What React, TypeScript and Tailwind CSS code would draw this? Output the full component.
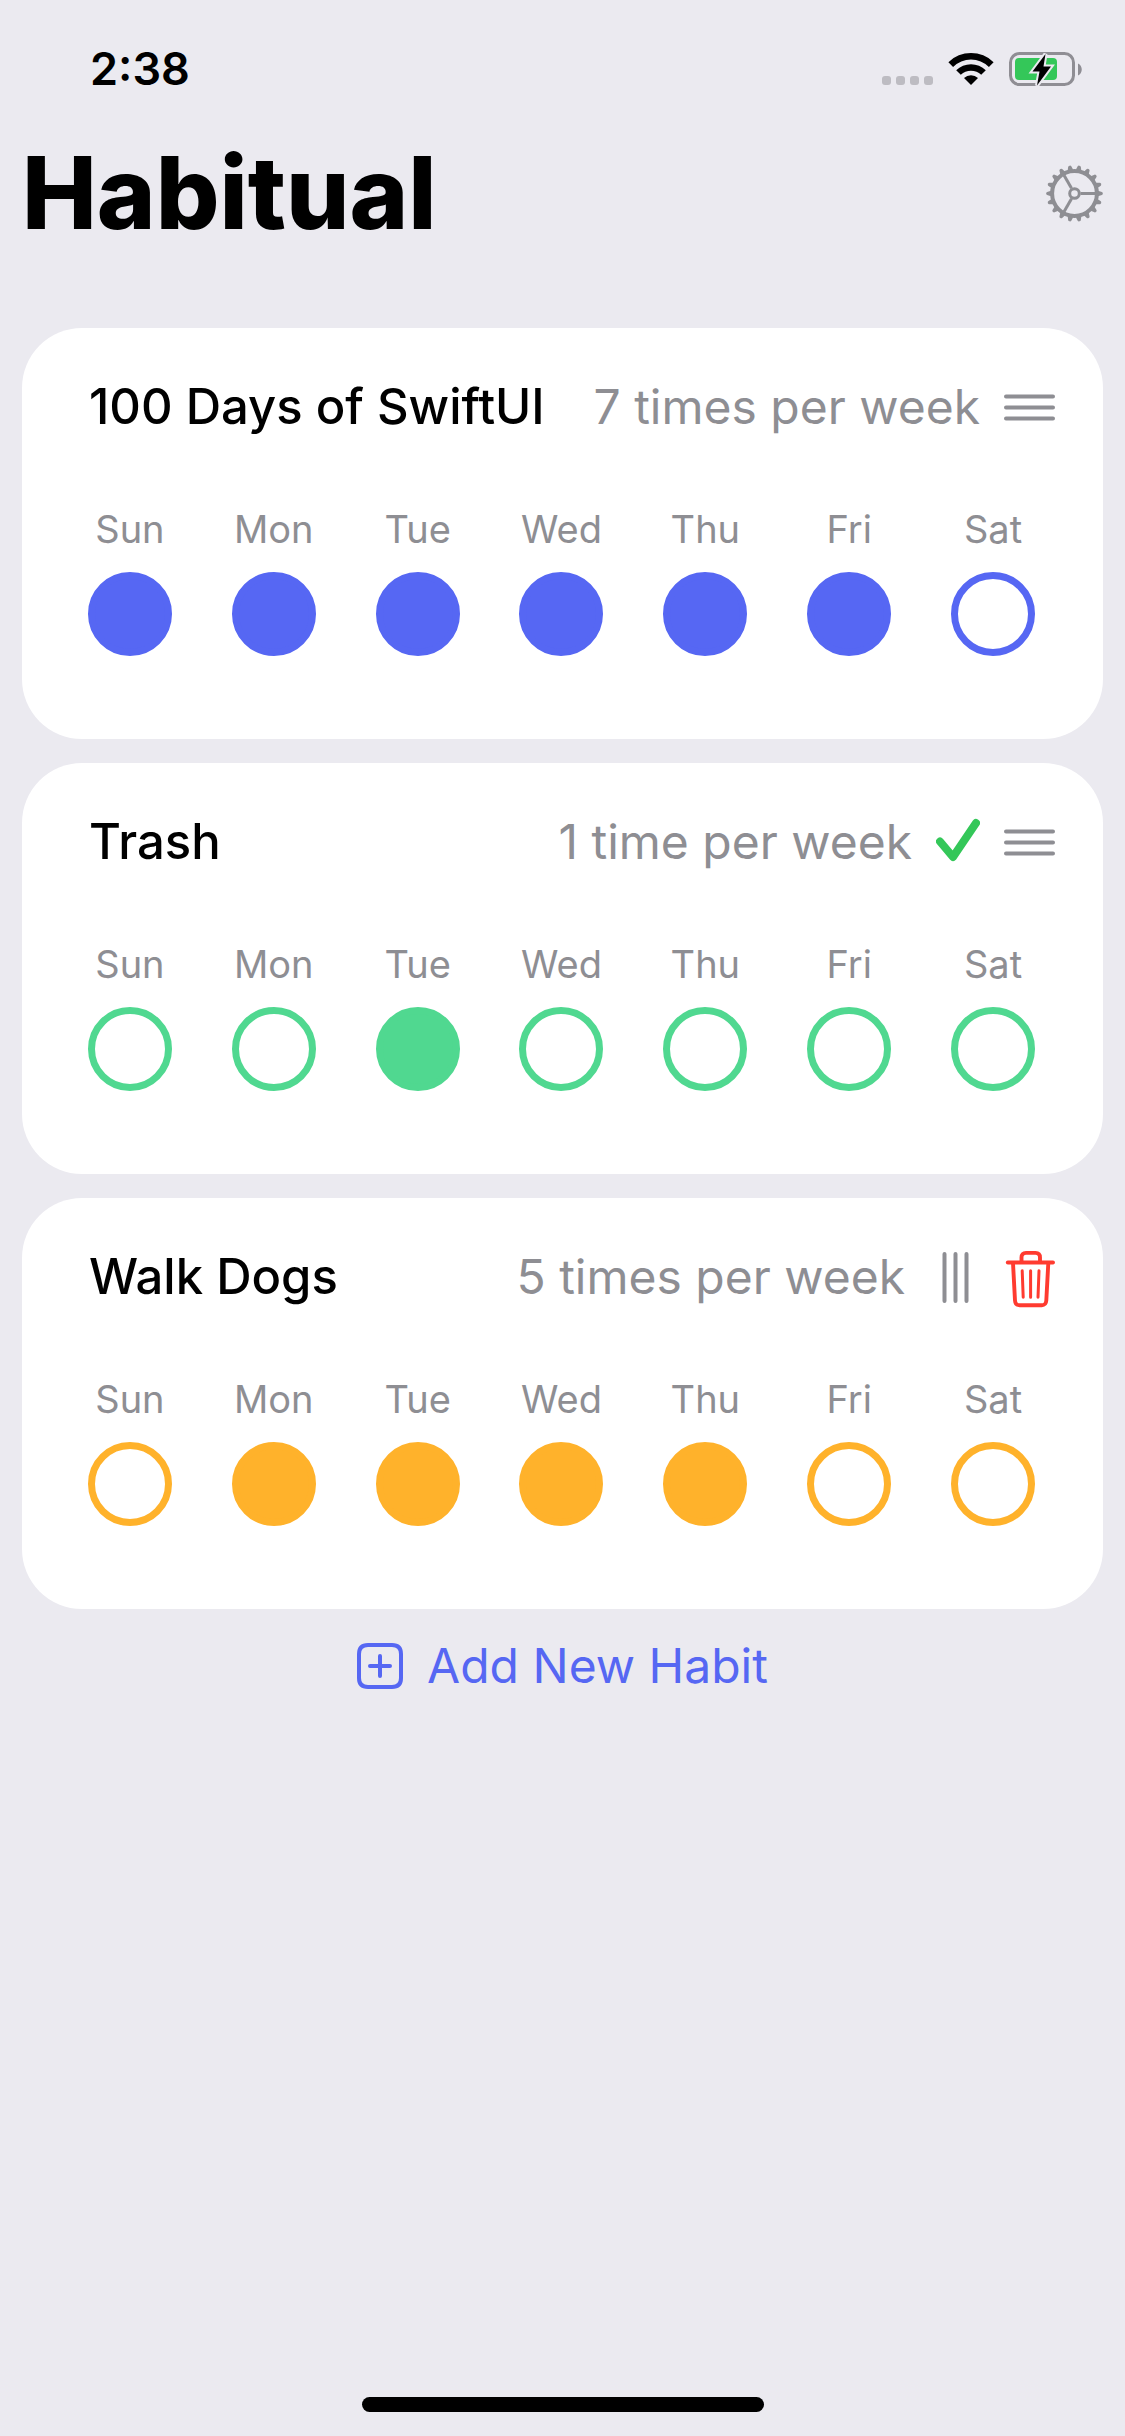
import { useState } from "react";

const DAYS = ["Sun", "Mon", "Tue", "Wed", "Thu", "Fri", "Sat"];

type Habit = {
  id: string;
  name: string;
  goal: string;
  circle: string;
  done: number[];
  complete?: boolean;
  editing?: boolean;
};

const HABITS: Habit[] = [
  {
    id: "swiftui",
    name: "100 Days of SwiftUI",
    goal: "7 times per week",
    circle: "border-[#5667f3] checked:bg-[#5667f3]",
    done: [0, 1, 2, 3, 4, 5],
  },
  {
    id: "trash",
    name: "Trash",
    goal: "1 time per week",
    circle: "border-[#50d890] checked:bg-[#50d890]",
    done: [2],
    complete: true,
  },
  {
    id: "dogs",
    name: "Walk Dogs",
    goal: "5 times per week",
    circle: "border-[#ffb22b] checked:bg-[#ffb22b]",
    done: [1, 2, 3, 4],
    editing: true,
  },
];

function SignalDots() {
  return (
    <div className="flex gap-[5px] self-end pb-[2px]">
      {[0, 1, 2, 3].map((i) => (
        <span key={i} className="size-[9px] rounded-[3px] bg-[#bdbcc2]" />
      ))}
    </div>
  );
}

function WifiIcon() {
  return (
    <svg width="46" height="34" viewBox="0 0 46 34" aria-label="Wi-Fi">
      <path d="M0.4 10.2 A32.2 32.2 0 0 1 45.6 10.2 L40.9 14.9 A25.6 25.6 0 0 0 5.1 14.9 Z" />
      <path d="M8.2 18.2 A21.2 21.2 0 0 1 37.8 18.2 L33.2 22.8 A14.6 14.6 0 0 0 12.8 22.8 Z" />
      <path d="M16 26 A10.2 10.2 0 0 1 30 26 L23 33 Z" />
    </svg>
  );
}

function BatteryIcon() {
  return (
    <svg width="74" height="36" viewBox="0 0 74 36" aria-label="Battery charging">
      <rect x="1.5" y="2.5" width="63" height="31" rx="9" fill="none" stroke="#8f8e94" strokeWidth="3" />
      <path d="M69 12.5 C74 14.5 74 22.5 69 24.5 Z" fill="#8f8e94" />
      <rect x="6" y="7" width="42" height="22" rx="4" fill="#34c759" />
      <path
        d="M36.5 3 L23.5 20.5 L30.5 20.5 L28 34.5 L42 15.5 L34.5 15.5 Z"
        fill="#000"
        stroke="#ebeaf0"
        strokeWidth="4"
        paintOrder="stroke"
      />
    </svg>
  );
}

const TEETH = Array.from({ length: 18 }, (_, i) => i * 20);

function GearIcon() {
  return (
    <svg width="57" height="57" viewBox="-28.5 -28.5 57 57" fill="none" stroke="#8e8e93">
      <circle r="22.4" strokeWidth="4" />
      {TEETH.map((a) => (
        <path
          key={a}
          d="M23.5 -2.8 L27.4 -1.6 Q28.3 -1.2 28.3 0 Q28.3 1.2 27.4 1.6 L23.5 2.8 Z"
          fill="#8e8e93"
          stroke="none"
          transform={`rotate(${a})`}
        />
      ))}
      <circle r="4.8" strokeWidth="3" />
      <g strokeWidth="3">
        <path d="M6 0 H21" />
        <path d="M6 0 H21" transform="rotate(120)" />
        <path d="M6 0 H21" transform="rotate(240)" />
      </g>
    </svg>
  );
}

function LinesIcon({ vertical }: { vertical?: boolean }) {
  return (
    <svg
      width="51"
      height="51"
      viewBox="0 0 51 51"
      fill="none"
      stroke="#8e8e93"
      strokeWidth="4"
      strokeLinecap="round"
    >
      <path d={vertical ? "M15.5 2 V49 M26.5 2 V49 M37.5 2 V49" : "M2 14.5 H49 M2 25.5 H49 M2 36.5 H49"} />
    </svg>
  );
}

function CheckIcon() {
  return (
    <svg
      width="44"
      height="60"
      viewBox="0 0 44 60"
      fill="none"
      stroke="#34c759"
      strokeWidth="8"
      strokeLinecap="round"
      strokeLinejoin="round"
      role="img"
      aria-label="Goal met"
    >
      <path d="M4 29.5 L17 45 L40 11" />
    </svg>
  );
}

function TrashIcon() {
  return (
    <svg
      width="51"
      height="62"
      viewBox="-2 -5 51 62"
      fill="none"
      stroke="#ff3b30"
      strokeWidth="3.9"
      strokeLinecap="round"
      strokeLinejoin="round"
    >
      <path d="M1.8 11.5 H47" />
      <path d="M15.5 11 V6.5 Q15.5 1.9 20 1.9 H29.5 Q34 1.9 34 6.5 V11" />
      <path d="M7 12 L9 49.5 Q9.3 54.2 13.5 54.2 H35.8 Q40 54.2 40.3 49.5 L42.3 12" />
      <path strokeWidth="3" d="M16.2 19.8 L17.2 46.2 M24.6 19.8 V46.2 M33 19.8 L32 46.2" />
    </svg>
  );
}

function PlusSquareIcon() {
  return (
    <svg
      width="46"
      height="46"
      viewBox="0 0 46 46"
      fill="none"
      stroke="currentColor"
      strokeWidth="4"
      strokeLinecap="round"
    >
      <path d="M11 2 H35 Q44 2 44 11 V35 Q44 44 35 44 H11 Q2 44 2 35 V11 Q2 2 11 2 Z" />
      <path d="M23 13 V33 M13 23 H33" />
    </svg>
  );
}

function HabitCard({ habit }: { habit: Habit }) {
  const [done, setDone] = useState(habit.done);
  const toggle = (day: number) =>
    setDone((d) => (d.includes(day) ? d.filter((x) => x !== day) : [...d, day]));

  return (
    <li className="rounded-[60px] bg-white pt-[49px] pb-[83px]">
      <div className="flex h-[60px] items-center gap-6 pr-12 pl-[67px] leading-[60px] whitespace-nowrap">
        <h2 className="mr-auto text-[49px] font-medium">{habit.name}</h2>
        <p className="text-[48px] text-[#8e8e93]">{habit.goal}</p>
        {habit.complete && <CheckIcon />}
        <button type="button" aria-label={`Reorder ${habit.name}`}>
          <LinesIcon vertical={habit.editing} />
        </button>
        {habit.editing && (
          <button type="button" aria-label={`Delete ${habit.name}`}>
            <TrashIcon />
          </button>
        )}
      </div>
      <div className="mt-[68px] grid grid-cols-7 pr-[38px] pl-9">
        {DAYS.map((day, i) => (
          <label key={day} className="flex flex-col items-center gap-[19px]">
            <span className="text-[38px] leading-[48px] text-[#8e8e93]">{day}</span>
            <input
              type="checkbox"
              name={`${habit.id}-${day}`}
              checked={done.includes(i)}
              onChange={() => toggle(i)}
              className={`size-[84px] appearance-none rounded-full border-[7px] ${habit.circle}`}
            />
          </label>
        ))}
      </div>
    </li>
  );
}

export default function App() {
  return (
    <div className="flex min-h-screen flex-col bg-[#ebeaf0] px-[22px] pb-6 font-['Inter','Liberation_Sans',sans-serif] text-black">
      <div className="flex items-center justify-between pt-[41px] pr-5 pl-[68px]">
        <span className="text-[45px] leading-[56px] font-semibold">2:38</span>
        <div className="flex items-center gap-[15px]">
          <SignalDots />
          <WifiIcon />
          <BatteryIcon />
        </div>
      </div>

      <header className="mt-9 flex items-center justify-between">
        <h1 className="text-[100px] leading-[120px] font-extrabold">Habitual</h1>
        <button type="button" aria-label="Settings">
          <GearIcon />
        </button>
      </header>

      <main className="mt-[75px] flex flex-col">
        <ul className="flex flex-col gap-6">
          {HABITS.map((habit) => (
            <HabitCard key={habit.id} habit={habit} />
          ))}
        </ul>
        <button
          type="button"
          className="mt-[27px] flex items-center gap-6 self-center text-[48px] leading-[60px] text-[#5667f3]"
        >
          <PlusSquareIcon />
          Add New Habit
        </button>
      </main>

      <div className="mt-auto h-[15px] w-[402px] self-center rounded-full bg-black" />
    </div>
  );
}
